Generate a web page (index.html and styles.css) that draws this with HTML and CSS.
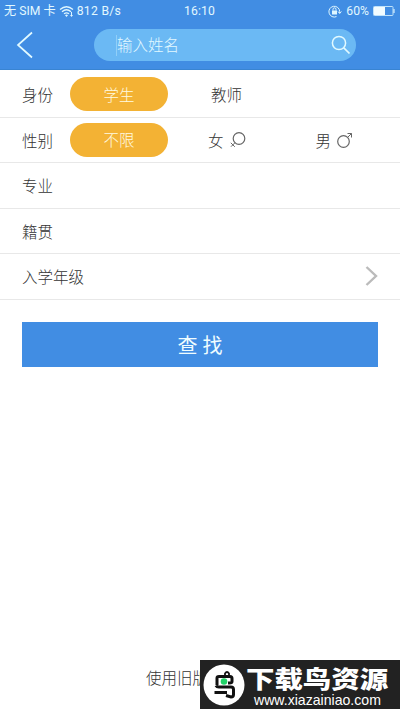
FILE: index.html
```html
<!DOCTYPE html>
<html lang="zh-CN">
<head>
    <meta charset="UTF-8">
    <meta name="viewport" content="width=device-width, initial-scale=1.0">
    <title>查找</title>
    <link rel="stylesheet" href="styles.css">
</head>
<body>
    <div class="page">
        <header class="header">
            <div class="status-bar">
                <div class="status-left">
                    <span class="carrier">无 SIM 卡</span>
                    <svg class="wifi" width="17" height="13" viewBox="0 0 17 13">
                        <path d="M1 4.5Q7.500 -1 14 4.500M3 6.700Q7.500 2.800 12 6.700M5 8.800Q7.500 6.800 10 8.800" fill="none" stroke="#def6ff" stroke-width="1.300"/>
                        <path d="M6 10.200Q7.500 9 9 10.200L7.500 12zM11 10h3l-1.500 2z" fill="#def6ff"/>
                        <path d="M12.500 7v3" stroke="#def6ff"/>
                    </svg>
                    <span class="speed">812 B/s</span>
                </div>
                <span class="clock">16:10</span>
                <div class="status-right">
                    <svg width="14" height="13" viewBox="0 0 14 13">
                        <path d="M8.500 11.600A5.400 5.400 0 1 1 11.700 6.500V8M10 6.500l1.700 2 1.700-2" fill="none" stroke="#def6ff"/>
                        <rect x="4" y="5.500" width="5" height="4" fill="#def6ff"/>
                        <path d="M5 5.500V4.300a1.500 1.500 0 0 1 3 0V5.500" fill="none" stroke="#def6ff"/>
                    </svg>
                    <span class="percent">60%</span>
                    <svg width="22" height="10" viewBox="0 0 22 10">
                        <rect x="0.500" y="0.500" width="19.500" height="9" rx="0.800" fill="none" stroke="#bfe2fa"/>
                        <rect x="1" y="1" width="11" height="8" fill="#f2fcff"/>
                        <path d="M21 3v4" stroke="#d5f0ff" stroke-width="1.200"/>
                    </svg>
                </div>
            </div>
            <div class="nav">
                <svg class="back" width="18" height="28" viewBox="0 0 18 28">
                    <path d="M16 1.500L2 14L16 26.500" fill="none" stroke="#e2faff" stroke-width="1.700"/>
                </svg>
                <div class="search">
                    <span class="placeholder">输入姓名</span>
                    <svg width="20" height="20" viewBox="0 0 20 20">
                        <circle cx="8" cy="8" r="6.600" fill="none" stroke="#e2faff" stroke-width="1.500"/>
                        <path d="M12.800 12.800L18.500 18.500" stroke="#e2faff" stroke-width="1.700"/>
                    </svg>
                </div>
            </div>
        </header>

        <main class="form">
            <div class="row row-first">
                <span class="label">身份</span>
                <span class="pill">学生</span>
                <span class="option option-teacher">教师</span>
            </div>
            <div class="row">
                <span class="label">性别</span>
                <span class="pill">不限</span>
                <span class="option option-female">女
                    <svg width="16" height="16" viewBox="0 0 16 16">
                        <path d="M5 10.700L1 14.700M0.800 10.800l4 4" fill="none" stroke="#666"/>
                        <circle cx="9" cy="6.500" r="5.800" fill="none" stroke="#666" stroke-width="1.200"/>
                    </svg>
                </span>
                <span class="option option-male">男
                    <svg width="16" height="16" viewBox="0 0 16 16">
                        <circle cx="6.500" cy="9.500" r="5.800" fill="none" stroke="#666" stroke-width="1.200"/>
                        <path d="M10.500 5.500L14.500 1.500M10.500 1.500h4v4" fill="none" stroke="#666"/>
                    </svg>
                </span>
            </div>
            <div class="row"><span class="label">专业</span></div>
            <div class="row"><span class="label">籍贯</span></div>
            <div class="row">
                <span class="label">入学年级</span>
                <svg class="arrow" width="14" height="20" viewBox="0 0 14 20">
                    <path d="M1.500 1L11 10L1.500 19" fill="none" stroke="#bbb" stroke-width="2.400"/>
                </svg>
            </div>
            <button class="submit">查 找</button>
        </main>

        <a class="old-version">使用旧版查找</a>

        <div class="watermark">
            <svg class="bird" width="42" height="42" viewBox="0 0 42 42">
                <circle cx="21" cy="21" r="20.500" fill="#fff"/>
                <path d="M22 11.500V9.500Q24 6.500 26 9.500V11.500" fill="none" stroke="#111" stroke-width="1.800"/>
                <path d="M14 21V14Q14 12.500 16 12.500H27Q29 12.500 29 14.500V17.500Q29 19 26.500 19H25M13 21.500Q14 23.500 17 23H28Q30.500 23 30.500 25.500V30.500Q30.500 33 28 33L23 31.500M11.500 28.500H24" fill="none" stroke="#111" stroke-width="3"/>
                <circle cx="21" cy="17.500" r="3.300" fill="#20d267"/>
            </svg>
            <div class="watermark-text">
                <div class="watermark-name">下载鸟资源</div>
                <div class="watermark-url">www.xiazainiao.com</div>
            </div>
        </div>
    </div>
</body>
</html>
```
FILE: styles.css
```css
* {
    box-sizing: border-box;
}
body {
    margin: 0;
    background: #fff;
    font-family: Roboto, "Noto Sans CJK SC", sans-serif;
    font-weight: 300;
    color: #333;
}
svg {
    display: block;
    flex: none;
}
.page {
    position: relative;
    display: flex;
    flex-direction: column;
    width: 400px;
    height: 711px;
    overflow: hidden;
}
.header {
    height: 70px;
    background: #418de3;
    border-bottom: 1px solid #3984d2;
    color: #e2f8ff;
}
.status-bar {
    display: grid;
    grid-template-columns: 1fr auto 1fr;
    align-items: center;
    height: 20px;
    padding: 1px 5px 0 4px;
    font-size: 12.2px;
    line-height: 20px;
    font-weight: 400;
}
.status-left, .status-right {
    display: flex;
    align-items: center;
    white-space: nowrap;
}
.status-right {
    justify-content: flex-end;
    gap: 4px;
}
.wifi {
    margin: 0 1px 0 3px;
}
.speed {
    letter-spacing: 0.3px;
}
.clock {
    letter-spacing: 0.1px;
}
.nav {
    display: flex;
    align-items: center;
    height: 50px;
    padding-left: 16px;
}
.search {
    display: flex;
    align-items: center;
    justify-content: space-between;
    width: 262px;
    height: 32px;
    margin-left: 60px;
    padding: 0 5px 0 22px;
    border-radius: 16px;
    background: #6bb9f4;
    font-size: 15.5px;
}
.placeholder {
    height: 21px;
    line-height: 22px;
    border-left: 1px solid #91cff8;
}
.row {
    display: flex;
    align-items: center;
    height: 45.5px;
    padding-left: 22px;
    border-bottom: 1px solid #e8e8e8;
    font-size: 15.5px;
}
.row-first {
    height: 47.5px;
    padding-top: 2px;
}
.pill {
    display: flex;
    align-items: center;
    justify-content: center;
    width: 98px;
    height: 34px;
    margin-left: 17px;
    padding-bottom: 1px;
    border-radius: 17px;
    background: #f3b234;
    color: #fffbe2;
}
.option {
    display: flex;
    align-items: center;
    gap: 6px;
}
.option-teacher {
    margin-left: 43px;
}
.option-female {
    margin-left: 40px;
}
.option-male {
    margin-left: 70px;
}
.arrow {
    margin-left: auto;
    margin-right: 21px;
}
.submit {
    display: block;
    width: 356px;
    height: 45px;
    margin: 22px 22px 0;
    padding: 0;
    border: 0;
    background: #418de3;
    color: #effcff;
    font: inherit;
    font-size: 20px;
    font-weight: 400;
}
.old-version {
    margin: auto 0 20px 146px;
    font-size: 15.5px;
    line-height: 24px;
}
.watermark {
    position: absolute;
    left: 200px;
    bottom: 2px;
    display: flex;
    width: 200px;
    height: 49px;
    padding: 4px 0 0 3px;
    background: #222;
    color: #fff;
}
.watermark-text {
    display: flex;
    flex-direction: column;
}
.watermark-name {
    height: 29px;
    margin-left: 1px;
    font-family: "Noto Sans CJK SC", sans-serif;
    font-size: 23.5px;
    font-weight: 900;
    line-height: 29px;
    white-space: nowrap;
    transform: scaleX(1.21);
    transform-origin: left;
}
.watermark-url {
    margin-left: 9px;
    font-family: "Liberation Sans", sans-serif;
    font-size: 14.1px;
    font-weight: 400;
    line-height: 15px;
}
```
